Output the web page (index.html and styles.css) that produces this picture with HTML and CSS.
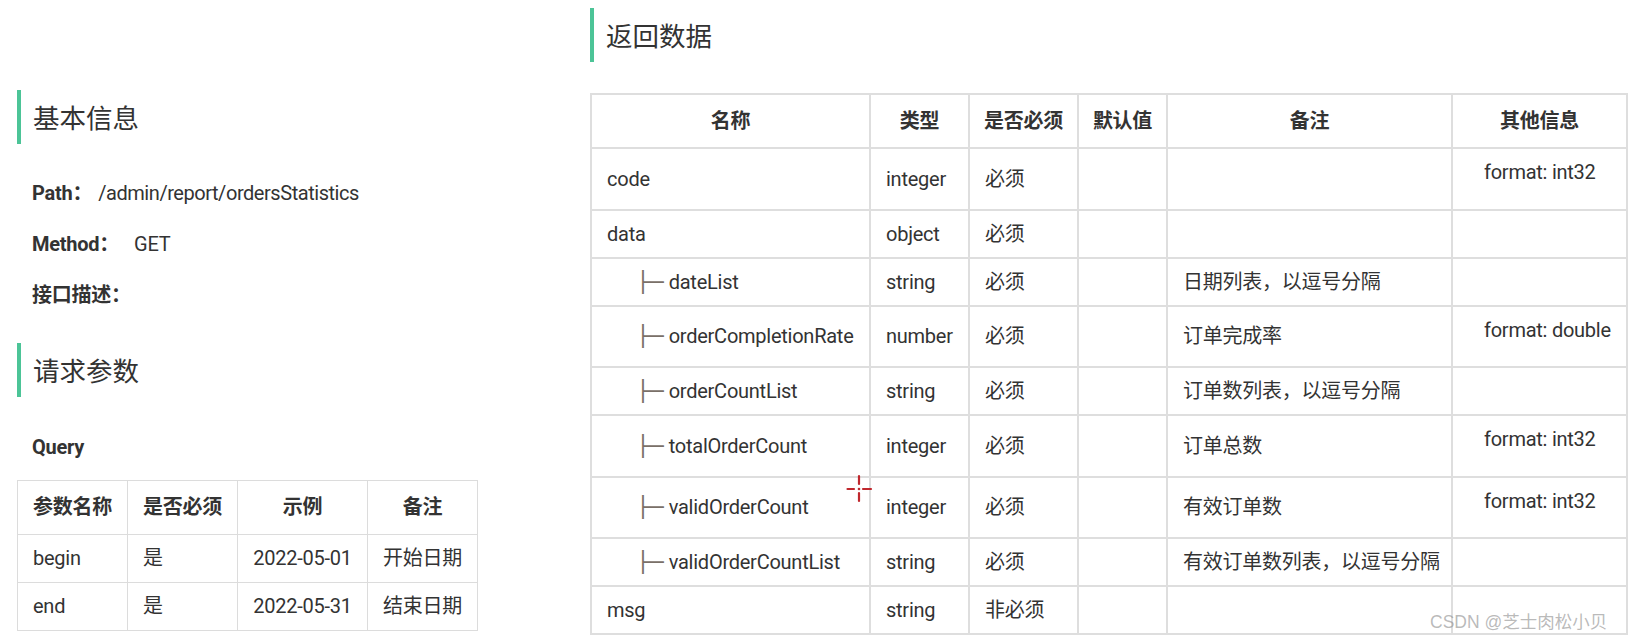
FILE: index.html
```html
<!DOCTYPE html>
<html lang="zh-CN">
<head>
<meta charset="utf-8">
<title>ordersStatistics</title>
<link rel="stylesheet" href="styles.css">
</head>
<body>
<div class="page">
  <div class="col-left">
    <h2 class="section-title">基本信息</h2>
    <p class="info info-first"><b class="label">Path：</b><span class="value value-path">/admin/report/ordersStatistics</span></p>
    <p class="info"><b class="label">Method：</b><span class="value value-method">GET</span></p>
    <p class="info"><b class="label">接口描述：</b></p>
    <h2 class="section-title section-gap">请求参数</h2>
    <p class="sub-title">Query</p>
    <table class="param-table">
      <colgroup>
        <col class="pc1"><col class="pc2"><col class="pc3"><col class="pc4">
      </colgroup>
      <thead>
        <tr><th>参数名称</th><th>是否必须</th><th>示例</th><th>备注</th></tr>
      </thead>
      <tbody>
        <tr><td>begin</td><td>是</td><td class="center">2022-05-01</td><td class="center">开始日期</td></tr>
        <tr><td>end</td><td>是</td><td class="center">2022-05-31</td><td class="center">结束日期</td></tr>
      </tbody>
    </table>
  </div>
  <div class="col-right">
    <h2 class="section-title">返回数据</h2>
    <table class="resp-table">
      <colgroup>
        <col class="rc1"><col class="rc2"><col class="rc3"><col class="rc4"><col class="rc5"><col class="rc6">
      </colgroup>
      <thead>
        <tr><th>名称</th><th>类型</th><th>是否必须</th><th>默认值</th><th>备注</th><th>其他信息</th></tr>
      </thead>
      <tbody>
        <tr><td>code</td><td>integer</td><td>必须</td><td></td><td></td><td class="other"><div class="fmt">format: int32</div></td></tr>
        <tr><td>data</td><td>object</td><td>必须</td><td></td><td></td><td class="other"></td></tr>
        <tr><td class="child"><span class="tree">├─</span>dateList</td><td>string</td><td>必须</td><td></td><td>日期列表，以逗号分隔</td><td class="other"></td></tr>
        <tr><td class="child"><span class="tree">├─</span>orderCompletionRate</td><td>number</td><td>必须</td><td></td><td>订单完成率</td><td class="other"><div class="fmt">format: double</div></td></tr>
        <tr><td class="child"><span class="tree">├─</span>orderCountList</td><td>string</td><td>必须</td><td></td><td>订单数列表，以逗号分隔</td><td class="other"></td></tr>
        <tr><td class="child"><span class="tree">├─</span>totalOrderCount</td><td>integer</td><td>必须</td><td></td><td>订单总数</td><td class="other"><div class="fmt">format: int32</div></td></tr>
        <tr><td class="child"><span class="tree">├─</span>validOrderCount</td><td>integer</td><td>必须</td><td></td><td>有效订单数</td><td class="other"><div class="fmt">format: int32</div></td></tr>
        <tr><td class="child"><span class="tree">├─</span>validOrderCountList</td><td>string</td><td>必须</td><td></td><td>有效订单数列表，以逗号分隔</td><td class="other"></td></tr>
        <tr><td>msg</td><td>string</td><td>非必须</td><td></td><td></td><td class="other"></td></tr>
      </tbody>
    </table>
  </div>
</div>
<div class="watermark">CSDN @芝士肉松小贝</div>
<svg class="cursor" width="28" height="30" viewBox="0 0 28 30" aria-hidden="true">
  <g stroke="#c0272d" stroke-width="2.2" stroke-linecap="round">
    <line x1="1.5" y1="15" x2="8" y2="15"/>
    <line x1="17" y1="15" x2="25" y2="15"/>
    <line x1="13" y1="2" x2="13" y2="10"/>
    <line x1="13" y1="19" x2="13" y2="27"/>
  </g>
  <circle cx="13" cy="15" r="1.3" fill="#c0272d"/>
</svg>
</body>
</html>
```
FILE: styles.css
```css
html, body {
  margin: 0;
  padding: 0;
  background: #ffffff;
}

body {
  font-family: "Roboto", "Noto Sans CJK SC", sans-serif;
  font-size: 20px;
  letter-spacing: -0.25px;
  color: #333333;
  position: relative;
  width: 1637px;
  height: 640px;
  overflow: hidden;
}

.page {
  display: flex;
  align-items: flex-start;
}

.col-left {
  width: 460px;
  margin-left: 17px;
  padding-top: 90px;
}

.col-right {
  width: 1036px;
  margin-left: 113px;
  padding-top: 8px;
}

.section-title {
  margin: 0;
  height: 54px;
  line-height: 54px;
  border-left: 4px solid #4cc497;
  padding-left: 12px;
  font-family: "Noto Sans CJK SC", sans-serif;
  font-size: 26.5px;
  letter-spacing: 0;
  font-weight: 400;
  color: #333333;
}

.section-gap {
  margin-top: 35px;
}

.info {
  margin: 25px 0 0 15px;
  line-height: 26px;
  height: 26px;
}

.info-first {
  margin-top: 36px;
}

.label {
  font-weight: 700;
}

.value-path {
  margin-left: 6px;
  letter-spacing: -0.45px;
}

.value-method {
  margin-left: 15px;
}

.sub-title {
  margin: 37px 0 0 15px;
  line-height: 26px;
  font-weight: 700;
}

/* ---------- request params table ---------- */
.param-table {
  margin-top: 20px;
  border-collapse: collapse;
  table-layout: fixed;
  width: 460px;
}

.pc1 { width: 110px; }
.pc2 { width: 110px; }
.pc3 { width: 130px; }
.pc4 { width: 110px; }

.param-table th,
.param-table td {
  border: 1px solid #dcdcdc;
  line-height: 27px;
  padding: 10px 0 10px 15px;
  text-align: left;
  white-space: nowrap;
}

.param-table th {
  padding: 13px 0;
  text-align: center;
  font-weight: 700;
}

.param-table td.center {
  text-align: center;
  padding-left: 0;
}

/* ---------- response table ---------- */
.resp-table {
  margin-top: 31px;
  border-collapse: collapse;
  table-layout: fixed;
  width: 1036px;
}

.rc1 { width: 279px; }
.rc2 { width: 99px; }
.rc3 { width: 109px; }
.rc4 { width: 89px; }
.rc5 { width: 285px; }
.rc6 { width: 175px; }

.resp-table th,
.resp-table td {
  border: 2px solid #dedede;
  line-height: 26px;
  padding: 10px 0 10px 15px;
  text-align: left;
  vertical-align: middle;
  white-space: nowrap;
}

.resp-table th {
  padding: 13px 0;
  text-align: center;
  font-weight: 700;
}

.resp-table td.child {
  padding-left: 44px;
}

.tree {
  display: inline-block;
  font-family: "DejaVu Sans Mono", monospace;
  font-size: 23px;
  line-height: 26px;
  letter-spacing: 0;
  color: #7a7068;
  margin-right: 5px;
  vertical-align: top;
  transform: scaleY(0.88);
}

.resp-table td.other {
  padding-left: 31px;
}

.fmt {
  margin-bottom: 13.5px;
}

/* ---------- overlays ---------- */
.watermark {
  position: absolute;
  left: 1430px;
  top: 608px;
  font-family: "Liberation Sans", "Noto Sans CJK SC", sans-serif;
  font-size: 17.5px;
  line-height: 28px;
  letter-spacing: 0;
  color: rgba(140, 140, 140, 0.6);
  white-space: nowrap;
}

.cursor {
  position: absolute;
  left: 846px;
  top: 474px;
}
```
